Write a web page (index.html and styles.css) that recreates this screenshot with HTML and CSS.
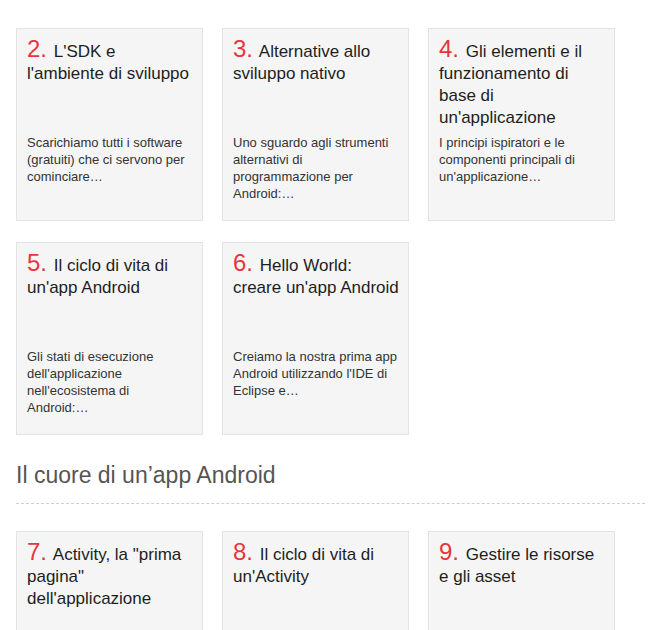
FILE: index.html
```html
<!DOCTYPE html>
<html lang="it">
<head>
<meta charset="utf-8">
<title>Guida Android</title>
<link rel="stylesheet" href="styles.css">
</head>
<body>
<div class="page">
  <div class="grid">
    <div class="card">
      <h3 class="title"><span class="num">2.</span> L'SDK e l'ambiente di sviluppo</h3>
      <p class="desc">Scarichiamo tutti i software (gratuiti) che ci servono per cominciare…</p>
    </div>
    <div class="card">
      <h3 class="title"><span class="num">3.</span> Alternative allo sviluppo nativo</h3>
      <p class="desc">Uno sguardo agli strumenti alternativi di programmazione per Android:…</p>
    </div>
    <div class="card">
      <h3 class="title"><span class="num">4.</span> Gli elementi e il funzionamento di base di un'applicazione</h3>
      <p class="desc">I principi ispiratori e le componenti principali di un'applicazione…</p>
    </div>
    <div class="card">
      <h3 class="title"><span class="num">5.</span> Il ciclo di vita di un'app Android</h3>
      <p class="desc">Gli stati di esecuzione dell'applicazione nell'ecosistema di Android:…</p>
    </div>
    <div class="card">
      <h3 class="title"><span class="num">6.</span> Hello World: creare un'app Android</h3>
      <p class="desc">Creiamo la nostra prima app Android utilizzando l'IDE di Eclipse e…</p>
    </div>
  </div>
  <h2 class="section">Il cuore di un’app Android</h2>
  <div class="grid">
    <div class="card">
      <h3 class="title"><span class="num">7.</span> Activity, la "prima pagina" dell'applicazione</h3>
      <p class="desc"></p>
    </div>
    <div class="card">
      <h3 class="title"><span class="num">8.</span> Il ciclo di vita di un'Activity</h3>
      <p class="desc"></p>
    </div>
    <div class="card">
      <h3 class="title"><span class="num">9.</span> Gestire le risorse e gli asset</h3>
      <p class="desc"></p>
    </div>
  </div>
</div>
</body>
</html>
```
FILE: styles.css
```css
html, body {
  margin: 0;
  padding: 0;
  background: #fff;
}
body {
  font-family: "Liberation Sans", Arial, sans-serif;
  color: #222;
}
.page {
  padding: 28px 20px 0 16px;
}
.grid {
  display: grid;
  grid-template-columns: repeat(3, 187px);
  column-gap: 19px;
  row-gap: 21px;
}
.card {
  box-sizing: border-box;
  height: 193px;
  background: #f5f5f5;
  border: 1px solid #e3e3e3;
  padding: 12px 10px 10px;
}
.title {
  margin: 0 -3px 0 0;
  min-height: 88px;
  font-size: 17px;
  font-weight: normal;
  line-height: 22px;
  color: #1e1e1e;
}
.num {
  font-size: 24px;
  line-height: 0;
  color: #e8353c;
  margin-right: 2px;
}
.desc {
  margin: 5px 0 0;
  font-size: 13px;
  line-height: 17px;
  color: #333;
}
.section {
  margin: 26px 0 27px;
  padding-bottom: 14px;
  border-bottom: 1px dashed #cfcfcf;
  font-size: 23px;
  font-weight: normal;
  line-height: 28px;
  color: #555;
}
```
